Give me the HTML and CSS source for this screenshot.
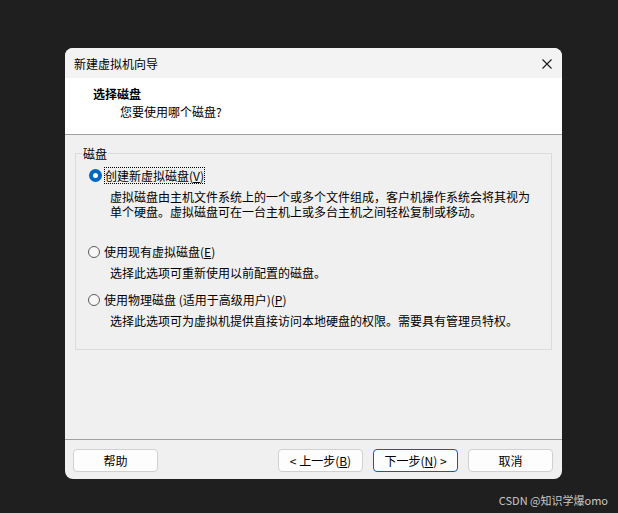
FILE: index.html
```html
<!DOCTYPE html>
<html lang="zh-CN">
<head>
<meta charset="utf-8">
<title>新建虚拟机向导</title>
<link rel="stylesheet" href="styles.css">
</head>
<body>
<div class="window">
  <div class="titlebar">
    <span class="title">新建虚拟机向导</span>
    <span class="close">
      <svg width="10" height="10" viewBox="0 0 10 10"><path d="M0.5 0.5 L9.5 9.5 M9.5 0.5 L0.5 9.5" stroke="#1a1a1a" stroke-width="1.1" fill="none"/></svg>
    </span>
  </div>
  <div class="header">
    <div class="h-title">选择磁盘</div>
    <div class="h-sub">您要使用哪个磁盘?</div>
  </div>
  <div class="main">
    <fieldset class="group">
      <legend class="legend">磁盘</legend>
      <div class="opt first">
        <span class="radio checked"></span>
        <span class="label focus">创建新虚拟磁盘(<u>V</u>)</span>
      </div>
      <div class="desc">虚拟磁盘由主机文件系统上的一个或多个文件组成，客户机操作系统会将其视为<br>单个硬盘。虚拟磁盘可在一台主机上或多台主机之间轻松复制或移动。</div>
      <div class="opt second">
        <span class="radio"></span>
        <span class="label">使用现有虚拟磁盘(<u>E</u>)</span>
      </div>
      <div class="desc">选择此选项可重新使用以前配置的磁盘。</div>
      <div class="opt third">
        <span class="radio"></span>
        <span class="label">使用物理磁盘 (适用于高级用户)(<u>P</u>)</span>
      </div>
      <div class="desc">选择此选项可为虚拟机提供直接访问本地硬盘的权限。需要具有管理员特权。</div>
    </fieldset>
  </div>
  <div class="footer">
    <button class="btn">帮助</button>
    <div class="spacer"></div>
    <button class="btn">&lt; 上一步(<u>B</u>)</button>
    <button class="btn primary">下一步(<u>N</u>) &gt;</button>
    <button class="btn">取消</button>
  </div>
</div>
<div class="watermark">CSDN @知识学爆omo</div>
</body>
</html>
```
FILE: styles.css
```css
html, body {
  margin: 0;
  padding: 0;
}
body {
  background: #1f1f1f;
  width: 618px;
  height: 513px;
  overflow: hidden;
  padding-top: 48px;
  box-sizing: border-box;
  font-family: "Noto Sans CJK SC", "Microsoft YaHei", sans-serif;
  font-size: 12px;
  color: #000;
}
.window {
  margin-left: 65px;
  width: 497px;
  height: 431px;
  background: #f0f0f0;
  border-radius: 8px;
  overflow: hidden;
  display: flex;
  flex-direction: column;
  box-sizing: border-box;
}
.titlebar {
  height: 30px;
  background: #f3f3f3;
  display: flex;
  align-items: center;
  padding-left: 9px;
  padding-right: 10px;
  flex-shrink: 0;
}
.title {
  flex: 1;
  line-height: 15px;
  padding-top: 1px;
}
.close {
  width: 10px;
  height: 10px;
  display: flex;
  margin-top: 1px;
}
.header {
  height: 56px;
  background: #fff;
  border-bottom: 1px solid #a0a0a0;
  flex-shrink: 0;
  box-sizing: content-box;
}
.h-title {
  font-weight: bold;
  margin-left: 28px;
  margin-top: 8px;
  line-height: 15px;
}
.h-sub {
  margin-left: 55px;
  margin-top: 3px;
  line-height: 15px;
}
.main {
  flex: 1;
  padding: 11px 10px 0 10px;
}
.group {
  margin: 0;
  padding: 0 0 21px 12px;
  border: 1px solid #dcdcdc;
  min-width: 0;
}
.legend {
  padding: 0 1px;
  margin-left: -6px;
  line-height: 15px;
}
.opt {
  display: flex;
  align-items: center;
  line-height: 15px;
  height: 15px;
}
.opt.first { margin-top: 7px; }
.opt.second { margin-top: 25px; }
.opt.third { margin-top: 12px; }
.radio {
  width: 12px;
  height: 12px;
  box-sizing: border-box;
  border-radius: 50%;
  border: 1px solid #5c5c5c;
  background: #f7f7f7;
  margin-right: 4px;
  flex-shrink: 0;
  position: relative;
}
.radio.checked {
  border: none;
  background: #0067c0;
  width: 13px;
  height: 13px;
  margin-right: 3px;
  margin-left: 1px;
}
.radio.checked::after {
  content: "";
  position: absolute;
  left: 4px;
  top: 4px;
  width: 5px;
  height: 5px;
  border-radius: 50%;
  background: #fff;
}
.label u {
  text-underline-offset: 1px;
}
.label.focus {
  outline: 1px dotted #000;
  outline-offset: 0px;
}
.desc {
  margin-top: 6px;
  margin-left: 22px;
  line-height: 15px;
  white-space: nowrap;
}
.footer {
  border-top: 1px solid #a0a0a0;
  height: 40px;
  box-sizing: border-box;
  padding: 9px 9px 7px 8px;
  display: flex;
  align-items: flex-start;
  gap: 10px;
  flex-shrink: 0;
}
.spacer {
  flex: 1;
}
.btn {
  width: 85px;
  height: 23px;
  margin: 0;
  padding: 0;
  background: #fdfdfd;
  border: 1px solid #d0d0d0;
  border-radius: 4px;
  font-family: inherit;
  font-size: 12px;
  color: #000;
  line-height: 15px;
}
.btn.primary {
  border-color: #005fb8;
}
.watermark {
  margin-top: 14px;
  text-align: right;
  padding-right: 10px;
  color: #c8c8c8;
  font-size: 11px;
  line-height: 15px;
}
```
